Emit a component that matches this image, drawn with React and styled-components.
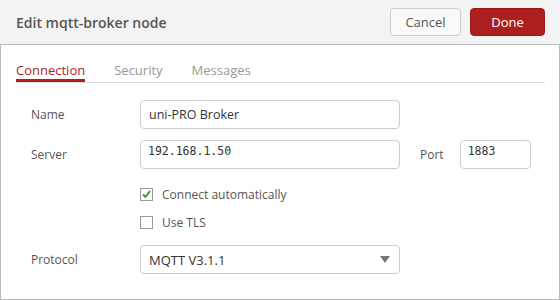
import React from 'react';
import styled, { createGlobalStyle } from 'styled-components';

const GlobalStyle = createGlobalStyle`
  html, body {
    margin: 0;
    padding: 0;
    background: #ffffff;
  }
  body {
    font-family: 'Open Sans', 'Noto Sans', sans-serif;
    color: #555;
  }
  * {
    box-sizing: border-box;
  }
`;

export default function App() {
  return (
    <>
      <GlobalStyle />
      <Dialog>
        <Header>
          <Title>Edit mqtt-broker node</Title>
          <Actions>
            <Button>Cancel</Button>
            <Button $primary>Done</Button>
          </Actions>
        </Header>
        <Body>
          <TabBar>
            <Tab $active>Connection</Tab>
            <Tab>Security</Tab>
            <Tab>Messages</Tab>
          </TabBar>
          <Form>
            <Row>
              <Label>Name</Label>
              <TextInput defaultValue="uni-PRO Broker" />
            </Row>
            <Row $mt={11}>
              <Label>Server</Label>
              <MonoInput defaultValue="192.168.1.50" />
              <PortLabel>Port</PortLabel>
              <MonoInput $width={71} defaultValue="1883" />
            </Row>
            <CheckRow $mt={11}>
              <CheckBox $checked>
                <svg width="11" height="11" viewBox="0 0 11 11">
                  <polyline
                    points="2,5.5 4.5,8 9,2"
                    fill="none"
                    stroke="#3b8a35"
                    strokeWidth="1.8"
                  />
                </svg>
              </CheckBox>
              <CheckText>Connect automatically</CheckText>
            </CheckRow>
            <CheckRow>
              <CheckBox />
              <CheckText>Use TLS</CheckText>
            </CheckRow>
            <Row $mt={9}>
              <Label>Protocol</Label>
              <Select>
                <span>MQTT V3.1.1</span>
                <Caret />
              </Select>
            </Row>
          </Form>
        </Body>
      </Dialog>
    </>
  );
}

const Dialog = styled.div`
  width: 560px;
  height: 300px;
  display: flex;
  flex-direction: column;
  background: #fff;
`;

const Header = styled.div`
  height: 44px;
  background: #f3f3f3;
  display: flex;
  align-items: center;
  justify-content: space-between;
  padding: 0 15px 0 16px;
  flex-shrink: 0;
`;

const Title = styled.div`
  font-size: 14px;
  font-weight: 600;
  color: #555;
`;

const Actions = styled.div`
  display: flex;
  gap: 9px;
`;

const Button = styled.button`
  font-family: 'Open Sans', 'Noto Sans', sans-serif;
  height: 28px;
  width: ${(p) => (p.$primary ? '75px' : '71px')};
  border-radius: 4px;
  font-size: 13px;
  padding: 0;
  cursor: pointer;
  border: 1px solid ${(p) => (p.$primary ? '#9c1a1a' : '#ccc')};
  background: ${(p) => (p.$primary ? '#ad1f1f' : '#f9f9f9')};
  color: ${(p) => (p.$primary ? '#fff' : '#555')};
`;

const Body = styled.div`
  flex: 1;
  border: 1px solid #bbb;
  padding: 12px 14px 0 15px;
`;

const TabBar = styled.div`
  display: flex;
  gap: 29px;
  border-bottom: 1px solid #ddd;
`;

const Tab = styled.div`
  font-size: 13px;
  line-height: 18px;
  padding-top: 4px;
  border-bottom: 3px solid ${(p) => (p.$active ? '#ad1f1f' : 'transparent')};
  color: ${(p) => (p.$active ? '#ad1f1f' : '#999')};
`;

const Form = styled.div`
  display: flex;
  flex-direction: column;
  padding: 17px 0 0 15px;
`;

const Row = styled.div`
  display: flex;
  align-items: center;
  margin-top: ${(p) => p.$mt || 0}px;
`;

const Label = styled.label`
  width: 109px;
  font-size: 12px;
  color: #555;
`;

const PortLabel = styled(Label)`
  width: auto;
  margin: 0 16px 0 20px;
`;

const TextInput = styled.input`
  width: 260px;
  height: 29px;
  border: 1px solid #ccc;
  border-radius: 4px;
  padding: 0 8px;
  font-family: 'Open Sans', 'Noto Sans', sans-serif;
  font-size: 12.5px;
  color: #333;
  outline: none;
`;

const MonoInput = styled.input`
  width: ${(p) => p.$width || 260}px;
  height: 29px;
  border: 1px solid #ccc;
  border-radius: 4px;
  padding: 3px 6px 10px 7px;
  font-family: 'DejaVu Sans Mono', monospace;
  font-size: 11.5px;
  line-height: 14px;
  color: #333;
  outline: none;
`;

const CheckRow = styled.div`
  display: flex;
  align-items: center;
  height: 28px;
  padding-left: 109px;
  margin-top: ${(p) => p.$mt || 0}px;
`;

const CheckBox = styled.span`
  width: 13px;
  height: 13px;
  border: 1px solid #999;
  background: #fff;
  display: flex;
  align-items: center;
  justify-content: center;
  margin-right: 9px;
`;

const CheckText = styled.span`
  font-size: 12px;
  color: #555;
`;

const Select = styled.div`
  width: 260px;
  height: 29px;
  border: 1px solid #ccc;
  border-radius: 4px;
  padding: 0 9px 0 8px;
  display: flex;
  align-items: center;
  justify-content: space-between;
  font-size: 13px;
  color: #333;
`;

const Caret = styled.span`
  width: 0;
  height: 0;
  border-left: 5.5px solid transparent;
  border-right: 5.5px solid transparent;
  border-top: 7px solid #777;
`;
